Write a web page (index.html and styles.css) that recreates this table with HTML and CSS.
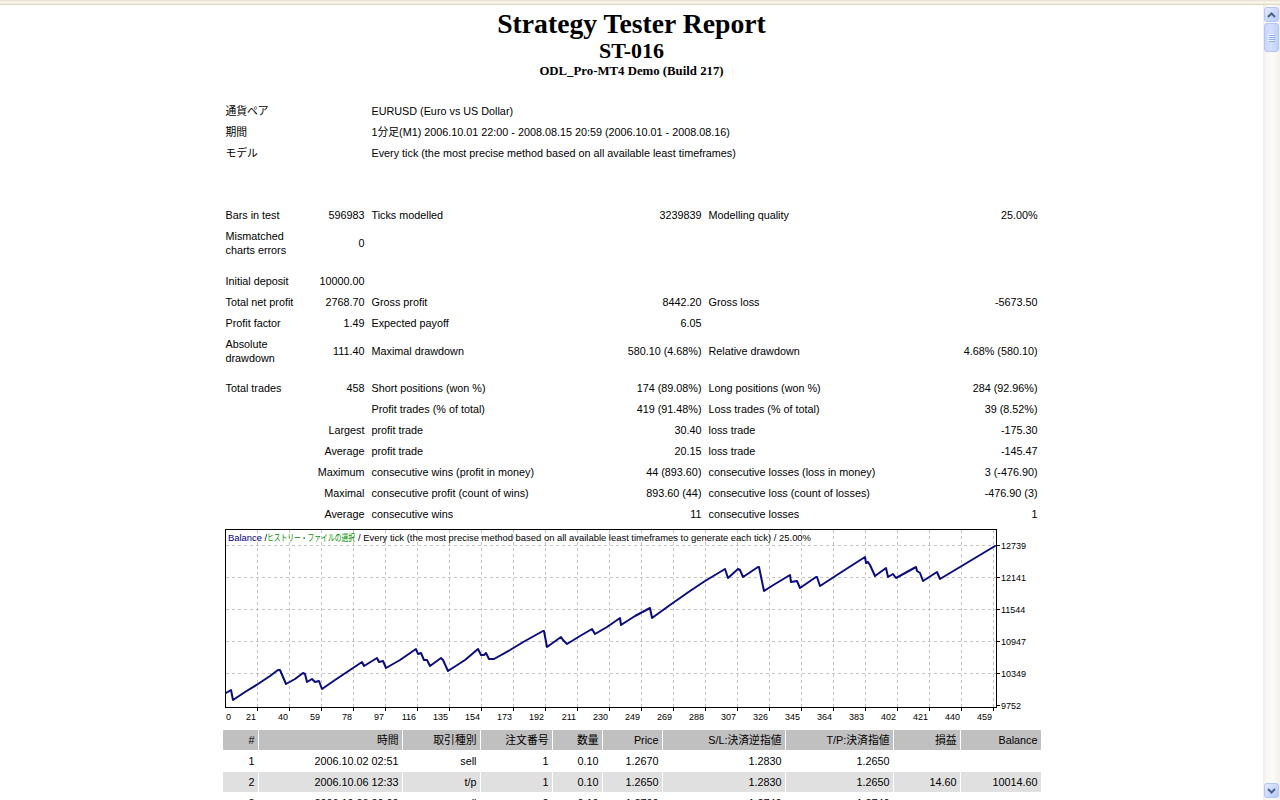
FILE: index.html
```html
<!DOCTYPE html>
<html lang="ja">
<head>
<meta charset="utf-8">
<title>Strategy Tester: ST-016</title>
<link rel="stylesheet" href="styles.css">
</head>
<body>
<div class="window">
  <div class="chrome-top"></div>
  <div class="viewport">
    <main class="page">
      <header class="report-head">
        <div class="title">Strategy Tester Report</div>
        <div class="subtitle">ST-016</div>
        <div class="server">ODL_Pro-MT4 Demo (Build 217)</div>
      </header>

      <table class="summary">
        <colgroup>
          <col class="c1"><col class="c2"><col class="c3"><col class="c4"><col class="c5"><col class="c6">
        </colgroup>
        <tr><td colspan="2">通貨ペア</td><td colspan="4">EURUSD (Euro vs US Dollar)</td></tr>
        <tr><td colspan="2">期間</td><td colspan="4">1分足(M1) 2006.10.01 22:00 - 2008.08.15 20:59 (2006.10.01 - 2008.08.16)</td></tr>
        <tr><td colspan="2">モデル</td><td colspan="4">Every tick (the most precise method based on all available least timeframes)</td></tr>
        <tr class="gap-lg"><td colspan="6"></td></tr>
        <tr><td>Bars in test</td><td class="r">596983</td><td>Ticks modelled</td><td class="r">3239839</td><td>Modelling quality</td><td class="r">25.00%</td></tr>
        <tr><td>Mismatched charts errors</td><td class="r">0</td><td></td><td></td><td></td><td></td></tr>
        <tr class="gap-9"><td colspan="6"></td></tr>
        <tr><td>Initial deposit</td><td class="r">10000.00</td><td></td><td></td><td></td><td></td></tr>
        <tr><td>Total net profit</td><td class="r">2768.70</td><td>Gross profit</td><td class="r">8442.20</td><td>Gross loss</td><td class="r">-5673.50</td></tr>
        <tr><td>Profit factor</td><td class="r">1.49</td><td>Expected payoff</td><td class="r">6.05</td><td></td><td></td></tr>
        <tr><td>Absolute drawdown</td><td class="r">111.40</td><td>Maximal drawdown</td><td class="r">580.10 (4.68%)</td><td>Relative drawdown</td><td class="r">4.68% (580.10)</td></tr>
        <tr class="gap-8"><td colspan="6"></td></tr>
        <tr><td>Total trades</td><td class="r">458</td><td>Short positions (won %)</td><td class="r">174 (89.08%)</td><td>Long positions (won %)</td><td class="r">284 (92.96%)</td></tr>
        <tr><td></td><td></td><td>Profit trades (% of total)</td><td class="r">419 (91.48%)</td><td>Loss trades (% of total)</td><td class="r">39 (8.52%)</td></tr>
        <tr><td></td><td class="r">Largest</td><td>profit trade</td><td class="r">30.40</td><td>loss trade</td><td class="r">-175.30</td></tr>
        <tr><td></td><td class="r">Average</td><td>profit trade</td><td class="r">20.15</td><td>loss trade</td><td class="r">-145.47</td></tr>
        <tr><td></td><td class="r">Maximum</td><td>consecutive wins (profit in money)</td><td class="r">44 (893.60)</td><td>consecutive losses (loss in money)</td><td class="r">3 (-476.90)</td></tr>
        <tr><td></td><td class="r">Maximal</td><td>consecutive profit (count of wins)</td><td class="r">893.60 (44)</td><td>consecutive loss (count of losses)</td><td class="r">-476.90 (3)</td></tr>
        <tr><td></td><td class="r">Average</td><td>consecutive wins</td><td class="r">11</td><td>consecutive losses</td><td class="r">1</td></tr>
      </table>

      <svg class="graph" width="820" height="200" viewBox="222 527 820 200" xmlns="http://www.w3.org/2000/svg">
        <rect class="g-frame" x="225.5" y="529.5" width="771" height="178"/>
        <path class="g-grid" d="M257.5 530V707M289.5 530V707M321.5 530V707M353.5 530V707M385.5 530V707M417.5 530V707M449.5 530V707M481.5 530V707M513.5 530V707M545.5 530V707M577.5 530V707M609.5 530V707M641.5 530V707M673.5 530V707M705.5 530V707M737.5 530V707M769.5 530V707M801.5 530V707M833.5 530V707M865.5 530V707M897.5 530V707M929.5 530V707M961.5 530V707M993.5 530V707"/>
        <path class="g-grid" d="M226 545.5H996M226 577.5H996M226 609.5H996M226 641.5H996M226 673.5H996"/>
        <path class="g-tick" d="M997 545.5H1000M997 577.5H1000M997 609.5H1000M997 641.5H1000M997 673.5H1000M997 705.5H1000M257.5 708V711M289.5 708V711M321.5 708V711M353.5 708V711M385.5 708V711M417.5 708V711M449.5 708V711M481.5 708V711M513.5 708V711M545.5 708V711M577.5 708V711M609.5 708V711M641.5 708V711M673.5 708V711M705.5 708V711M737.5 708V711M769.5 708V711M801.5 708V711M833.5 708V711M865.5 708V711M897.5 708V711M929.5 708V711M961.5 708V711M993.5 708V711"/>
        <polyline class="g-line" points="226,693 231,690 233,700 245,692 258,684 270,676 278,670 280,670 286,684 295,679 303,673 305,674 307,682 312,679 315,682 319,681 322,689 335,680 350,670 362,662 364,666 377,658 379,662 383,661 386,668 400,660 416,649 418,654 421,653 424,660 427,660 430,666 441,658 443,660 448,671 465,660 478,649 481,655 484,655 486,653 489,659 494,659 510,650 525,641 543,631 544,631 547,647 561,637 563,640 567,644 580,636 592,629 595,634 607,627 620,618 621,625 635,616 650,608 652,618 670,605 690,591 705,581 720,572 725,569 728,578 738,569 740,570 743,577 758,567 759,567 764,591 775,584 790,575 791,582 797,581 800,588 816,577 817,577 820,586 840,573 865,557 866,563 868,562 870,565 875,576 886,568 888,577 893,574 896,578 916,567 917,571 920,573 923,581 937,572 940,579 960,567 980,555 995,546"/>
        <text class="g-title" x="228" y="541"><tspan class="g-blue">Balance</tspan> /</text>
        <text class="g-title g-green" transform="translate(267 541) scale(0.72 1)">ヒストリー・ファイルの選択</text>
        <text class="g-title" x="358" y="541" textLength="453" lengthAdjust="spacingAndGlyphs">/ Every tick (the most precise method based on all available least timeframes to generate each tick) / 25.00%</text>
        <g class="g-label">
          <text x="1001" y="549">12739</text>
          <text x="1001" y="581">12141</text>
          <text x="1001" y="613">11544</text>
          <text x="1001" y="645">10947</text>
          <text x="1001" y="677">10349</text>
          <text x="1001" y="709">9752</text>
        </g>
        <g class="g-label">
          <text x="226" y="719.5">0</text>
        </g>
        <g class="g-label g-end">
          <text x="256" y="719.5">21</text>
          <text x="288" y="719.5">40</text>
          <text x="320" y="719.5">59</text>
          <text x="352" y="719.5">78</text>
          <text x="384" y="719.5">97</text>
          <text x="416" y="719.5">116</text>
          <text x="448" y="719.5">135</text>
          <text x="480" y="719.5">154</text>
          <text x="512" y="719.5">173</text>
          <text x="544" y="719.5">192</text>
          <text x="576" y="719.5">211</text>
          <text x="608" y="719.5">230</text>
          <text x="640" y="719.5">249</text>
          <text x="672" y="719.5">269</text>
          <text x="704" y="719.5">288</text>
          <text x="736" y="719.5">307</text>
          <text x="768" y="719.5">326</text>
          <text x="800" y="719.5">345</text>
          <text x="832" y="719.5">364</text>
          <text x="864" y="719.5">383</text>
          <text x="896" y="719.5">402</text>
          <text x="928" y="719.5">421</text>
          <text x="960" y="719.5">440</text>
          <text x="992" y="719.5">459</text>
        </g>
      </svg>

      <table class="trades">
        <colgroup>
          <col class="t1"><col class="t2"><col class="t3"><col class="t4"><col class="t5"><col class="t6"><col class="t7"><col class="t8"><col class="t9"><col class="t10">
        </colgroup>
        <tr class="head">
          <th>#</th><th>時間</th><th>取引種別</th><th>注文番号</th><th>数量</th><th>Price</th><th>S/L:決済逆指値</th><th>T/P:決済指値</th><th>損益</th><th>Balance</th>
        </tr>
        <tr>
          <td>1</td><td>2006.10.02 02:51</td><td>sell</td><td>1</td><td>0.10</td><td>1.2670</td><td>1.2830</td><td>1.2650</td><td></td><td></td>
        </tr>
        <tr class="alt">
          <td>2</td><td>2006.10.06 12:33</td><td>t/p</td><td>1</td><td>0.10</td><td>1.2650</td><td>1.2830</td><td>1.2650</td><td>14.60</td><td>10014.60</td>
        </tr>
        <tr>
          <td>3</td><td>2006.10.06 20:00</td><td>sell</td><td>2</td><td>0.10</td><td>1.2700</td><td>1.2740</td><td>1.2740</td><td></td><td></td>
        </tr>
      </table>
    </main>

    <div class="scrollbar">
      <div class="sb-btn">
        <svg class="sb-arrow" width="9" height="6" viewBox="0 0 9 6"><path d="M1 5L4.5 1.5L8 5"/></svg>
      </div>
      <div class="sb-thumb">
        <svg class="sb-grip" width="7" height="8" viewBox="0 0 7 8"><path class="grip-light" d="M0 0.5H6M0 2.5H6M0 4.5H6M0 6.5H6"/><path class="grip-dark" d="M1 1.5H7M1 3.5H7M1 5.5H7M1 7.5H7"/></svg>
      </div>
      <div class="sb-track"></div>
      <div class="sb-btn">
        <svg class="sb-arrow" width="9" height="6" viewBox="0 0 9 6"><path d="M1 1L4.5 4.5L8 1"/></svg>
      </div>
    </div>
  </div>
</div>
</body>
</html>
```

FILE: styles.css
```css
* {
  box-sizing: border-box;
}

html,
body {
  margin: 0;
  padding: 0;
  height: 100%;
  overflow: hidden;
  background: #ffffff;
}

.window {
  width: 1280px;
  height: 800px;
  display: flex;
  flex-direction: column;
}

.chrome-top {
  flex: none;
  height: 5px;
  background: linear-gradient(#e6e2d0 0, #ece9d8 1px, #f6f4ec 2px, #fbfaf6 3px, #e2ddca 4px, #d8d3bf 5px);
}

.viewport {
  flex: 1;
  min-height: 0;
  display: flex;
}

.page {
  flex: 1;
  min-width: 0;
  overflow: hidden;
  padding-top: 4px;
  background: #ffffff;
}

/* ---------- header ---------- */
.report-head {
  text-align: center;
  font-family: "Liberation Serif", "Times New Roman", serif;
  font-weight: bold;
  color: #000000;
}

.title {
  font-size: 27.7px;
  line-height: 30px;
}

.subtitle {
  font-size: 22px;
  line-height: 23px;
}

.server {
  margin-top: 2px;
  font-size: 12.8px;
  line-height: 15px;
}

/* ---------- tables ---------- */
.summary,
.trades {
  width: 820px;
  margin-left: auto;
  margin-right: auto;
  border-collapse: separate;
  border-spacing: 1px;
  table-layout: fixed;
  font-family: "Liberation Sans", "Noto Sans CJK JP", sans-serif;
  font-size: 10.8px;
  line-height: 14px;
  color: #000000;
}

.summary {
  margin-top: 21px;
}

.summary td {
  padding: 3px;
  text-align: left;
  vertical-align: middle;
}

.summary td.r {
  text-align: right;
}

.c1 { width: 86px; }
.c2 { width: 58px; }
.c3 { width: 199px; }
.c4 { width: 136px; }
.c5 { width: 199px; }
.c6 { width: 135px; }

.summary .gap-lg td {
  padding: 0;
  height: 40px;
}

.summary .gap-9 td {
  padding: 0;
  height: 9px;
}

.summary .gap-8 td {
  padding: 0;
  height: 8px;
}

/* ---------- graph ---------- */
.graph {
  display: block;
  margin: 2px auto 0;
}

.g-frame {
  fill: #ffffff;
  stroke: #000000;
  stroke-width: 1;
}

.g-grid {
  fill: none;
  stroke: #c4c4c4;
  stroke-width: 1;
  stroke-dasharray: 3 3;
}

.g-tick {
  fill: none;
  stroke: #000000;
  stroke-width: 1;
}

.g-line {
  fill: none;
  stroke: #0c0c7c;
  stroke-width: 2;
  stroke-linejoin: round;
  stroke-linecap: round;
}

.g-title {
  font-family: "Liberation Sans", "Noto Sans CJK JP", sans-serif;
  font-size: 9.4px;
  fill: #000000;
}

.g-blue {
  fill: #000080;
}

.g-green {
  fill: #009000;
}

.g-label {
  font-family: "Liberation Sans", sans-serif;
  font-size: 9px;
  fill: #000000;
}

.g-end {
  text-anchor: end;
}

/* ---------- trades ---------- */
.trades {
  margin-top: 2px;
}

.trades th,
.trades td {
  padding: 3px;
  text-align: right;
  font-weight: normal;
  white-space: nowrap;
  overflow: hidden;
}

.trades .head th {
  background: #c0c0c0;
}

.trades .alt td {
  background: #e0e0e0;
}

.t1 { width: 35px; }
.t2 { width: 143px; }
.t3 { width: 77px; }
.t4 { width: 71px; }
.t5 { width: 49px; }
.t6 { width: 59px; }
.t7 { width: 122px; }
.t8 { width: 107px; }
.t9 { width: 66px; }
.t10 { width: 80px; }

/* ---------- scrollbar ---------- */
.scrollbar {
  flex: none;
  width: 17px;
  display: flex;
  flex-direction: column;
  align-items: center;
  padding: 2px 0;
  background: linear-gradient(to right, #eeede6 0, #f7f6f1 3px, #fbfbf8 9px, #f2f1eb 17px);
}

.sb-btn {
  flex: none;
  width: 15px;
  height: 15px;
  border: 1px solid #b3c6f1;
  border-radius: 3px;
  background: linear-gradient(135deg, #e2eafe 0%, #c9d8fc 55%, #b7cbf7 100%);
  display: flex;
  align-items: center;
  justify-content: center;
}

.sb-arrow path {
  fill: none;
  stroke: #4d6185;
  stroke-width: 2;
}

.sb-thumb {
  flex: none;
  width: 15px;
  height: 29px;
  margin-top: 1px;
  border: 1px solid #b3c6f1;
  border-radius: 3px;
  background: linear-gradient(to right, #c9d7fc 0%, #d3dffd 45%, #bfd0fa 100%);
  display: flex;
  align-items: center;
  justify-content: center;
}

.grip-light {
  fill: none;
  stroke: #eef3fe;
  stroke-width: 1;
}

.grip-dark {
  fill: none;
  stroke: #8faae8;
  stroke-width: 1;
}

.sb-track {
  flex: 1;
}
```
